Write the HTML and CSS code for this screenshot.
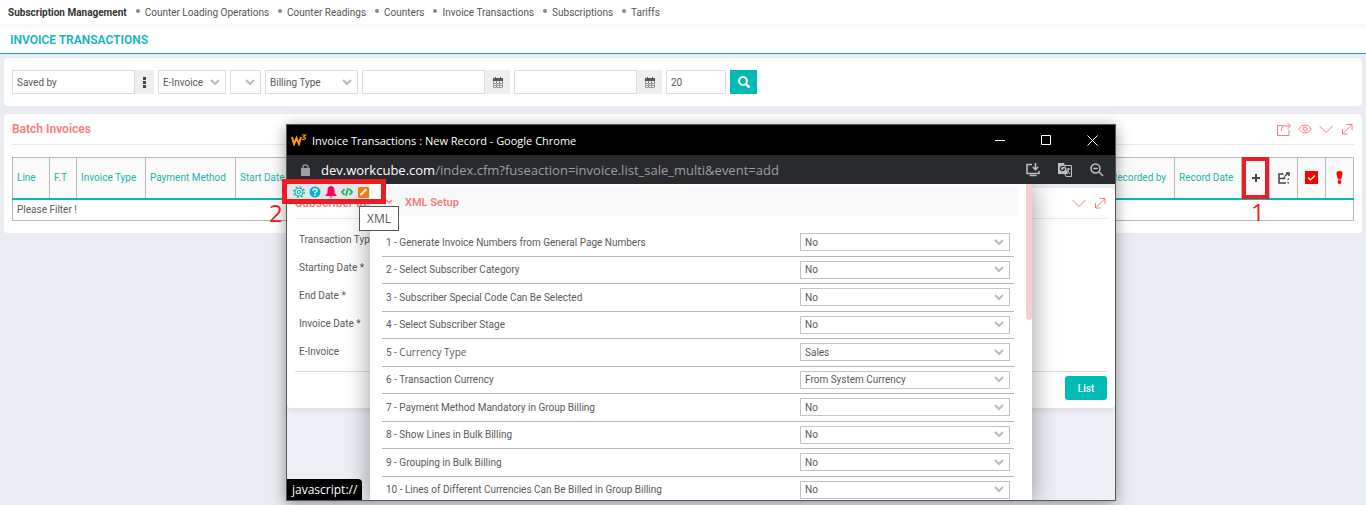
FILE: index.html
```html
<!DOCTYPE html>
<html lang="en">
<head>
    <meta charset="UTF-8">
    <meta name="viewport" content="width=device-width, initial-scale=1.0">
    <title>Invoice Transactions</title>
    <link rel="stylesheet" href="styles.css">
</head>
<body>

    <nav class="top-nav">
        <a href="#" class="active">Subscription Management</a>
        <a href="#">Counter Loading Operations</a>
        <a href="#">Counter Readings</a>
        <a href="#">Counters</a>
        <a href="#">Invoice Transactions</a>
        <a href="#">Subscriptions</a>
        <a href="#">Tariffs</a>
    </nav>

    <header class="page-title">
        <h1>INVOICE TRANSACTIONS</h1>
    </header>

    <main>
        <form class="card search-bar">
            <div class="group">
                <input type="text" class="field w-text" value="Saved by" aria-label="Saved by">
                <button type="button" class="addon addon-dots" aria-label="Select employee">
                    <svg width="3" height="11" viewBox="0 0 3 11"><path fill="#444" d="M0 0h3v3H0zM0 4h3v3H0zM0 8h3v3H0z"/></svg>
                </button>
            </div>
            <select class="field w-invoice" aria-label="E-Invoice"><option>E-Invoice</option></select>
            <select class="field w-empty" aria-label="Status"><option></option></select>
            <select class="field w-billing" aria-label="Billing Type"><option>Billing Type</option></select>
            <div class="group">
                <input type="text" class="field w-text" aria-label="Start date">
                <button type="button" class="addon" aria-label="Pick start date">
                    <svg width="10" height="11" viewBox="0 0 10 11"><path fill="none" stroke="#999" d="M.5 2.5h9v8h-9zM3.500 4v6M6.500 4v6M1 6.500h8M1 8.500h8"/><path fill="#555" d="M0 1h10v3H0zM2 0h1v2H2zM7 0h1v2H7z"/></svg>
                </button>
            </div>
            <div class="group">
                <input type="text" class="field w-text" aria-label="Finish date">
                <button type="button" class="addon" aria-label="Pick finish date">
                    <svg width="10" height="11" viewBox="0 0 10 11"><path fill="none" stroke="#999" d="M.5 2.5h9v8h-9zM3.500 4v6M6.500 4v6M1 6.500h8M1 8.500h8"/><path fill="#555" d="M0 1h10v3H0zM2 0h1v2H2zM7 0h1v2H7z"/></svg>
                </button>
            </div>
            <input type="text" class="field w-count" value="20" aria-label="Rows per page">
            <button type="submit" class="btn-search" aria-label="Search">
                <svg width="12" height="12" viewBox="0 0 12 12" fill="none" stroke="#fff"><circle cx="5" cy="5" r="3.900" stroke-width="2"/><path stroke-width="2.400" d="M8 8l3.500 3.500"/></svg>
            </button>
        </form>

        <section class="card batch">
            <div class="card-head">
                <h2>Batch Invoices</h2>
                <div class="card-tools">
                    <svg width="14" height="14" viewBox="0 0 14 14"><path d="M6 3.500H.5v10h11.500V8M4.500 9V7q0-3 3-3h5.500M10.500 1l3 3-3 3"/></svg>
                    <svg width="14" height="14" viewBox="0 0 14 14"><path d="M.5 7Q3.500 3 7 3t6.500 4Q10.500 11 7 11T.5 7z"/><circle cx="7" cy="7" r="2"/></svg>
                    <svg width="14" height="14" viewBox="0 0 14 14"><path d="M.5 4L7 10.500 13.500 4"/></svg>
                    <svg width="14" height="14" viewBox="0 0 14 14"><path d="M3 11.500l8.500-8.500M6.500 2.500H12V8M2.500 7v5H7.500"/></svg>
                </div>
            </div>
            <table class="list">
                <colgroup>
                    <col class="c-line"><col class="c-ft"><col class="c-type"><col class="c-method"><col>
                    <col class="c-by"><col class="c-date"><col class="c-icon"><col class="c-icon"><col class="c-icon"><col class="c-icon">
                </colgroup>
                <thead>
                    <tr>
                        <th>Line</th>
                        <th>F.T</th>
                        <th>Invoice Type</th>
                        <th>Payment Method</th>
                        <th>Start Date</th>
                        <th>Recorded by</th>
                        <th>Record Date</th>
                        <th class="icon marked">
                            <svg width="10" height="10" viewBox="0 0 10 10"><path fill="#444" d="M4 1h2v3h3v2H6v3H4V6H1V4h3z"/></svg>
                            <span class="mark mark-add"></span>
                            <span class="mark-no no-add">1</span>
                        </th>
                        <th class="icon">
                            <svg width="12" height="12" viewBox="0 0 12 12" fill="none" stroke="#444" stroke-width="1.500"><path d="M5.500 2H1v9h7M1 6.500h5.500V4.500M7 4l3.500-3M8 1h3v3"/><path fill="#444" stroke="none" d="M9.500 6.500H11V8H9.500zM9.500 10H11v1.500H9.500z"/></svg>
                        </th>
                        <th class="icon">
                            <svg width="13" height="13" viewBox="0 0 13 13"><path fill="red" d="M0 0h13v13H0z"/><path fill="none" stroke="#fff" stroke-width="1.200" d="M3 6.500L5.500 9 10 4.500"/></svg>
                        </th>
                        <th class="icon">
                            <svg width="7" height="13" viewBox="0 0 7 13" fill="red"><path d="M3.500 0Q7 0 6.500 3L5 8.500H2L.5 3Q0 0 3.500 0z"/><circle cx="3.500" cy="11" r="1.900"/></svg>
                        </th>
                    </tr>
                </thead>
                <tbody>
                    <tr>
                        <td colspan="11">Please Filter !</td>
                    </tr>
                </tbody>
            </table>
        </section>
    </main>

    <!-- popup window -->
    <div class="window">
        <div class="window-title">
            <svg width="16" height="12" viewBox="0 0 16 12" fill="none" stroke="#f90"><path stroke-width="2" d="M1 3l2 7 2.500-6L8 10l2-7"/><path stroke-width="1.200" d="M11 1h3.500l-2 2q2 0 2 1.300T11 5.400"/></svg>
            <span>Invoice Transactions : New Record - Google Chrome</span>
            <div class="window-buttons">
                <svg width="11" height="11" viewBox="0 0 11 11"><path d="M0 5.500h10"/></svg>
                <svg width="11" height="11" viewBox="0 0 11 11"><path d="M.5.5h9v9h-9z"/></svg>
                <svg width="11" height="11" viewBox="0 0 11 11"><path d="M.5.500l10 10M10.500.500l-10 10"/></svg>
            </div>
        </div>
        <div class="window-url">
            <svg width="9" height="12" viewBox="0 0 9 12"><path fill="#9aa0a6" d="M0 4h9v8H0z"/><path fill="none" stroke="#9aa0a6" stroke-width="1.300" d="M2 4.500V3Q2 .8 4.500.8T7 3v1.500"/></svg>
            <span class="url"><b>dev.workcube.com</b>/index.cfm?fuseaction=invoice.list_sale_multi&amp;event=add</span>
            <div class="url-tools">
                <svg width="14" height="14" viewBox="0 0 14 14" fill="none" stroke="#bdc1c6" stroke-width="1.500"><path d="M6 1.500H1v9h12V8M9.500 0v6M6.800 4l2.700 2.700L12.200 4"/><path d="M3.500 12.500h7"/></svg>
                <svg width="14" height="14" viewBox="0 0 14 14"><path fill="#bdc1c6" d="M0 0h6l4 11H0z"/><path fill="none" stroke="#bdc1c6" d="M7 2.500h6.500v11H8l-1-2.500M8.500 6h4M10.500 5v1q0 3-2 4M9 7l3 4"/><path fill="none" stroke="#292a2d" stroke-width="1.200" d="M6.500 4Q4.500 2.500 3 4t0 3 3.500-.5V6H5"/></svg>
                <svg width="14" height="14" viewBox="0 0 14 14" fill="none" stroke="#bdc1c6" stroke-width="1.500"><circle cx="5.500" cy="5.500" r="4.500"/><path d="M9 9l4 4M3.300 5.500h4.400"/></svg>
            </div>
        </div>

        <div class="window-body">
            <form class="record">
                <div class="card-head">
                    <h2>Subscriber In</h2>
                    <div class="card-tools">
                        <svg width="14" height="14" viewBox="0 0 14 14"><path d="M.5 4L7 10.500 13.500 4"/></svg>
                        <svg width="14" height="14" viewBox="0 0 14 14"><path d="M3 11.500l8.500-8.500M6.500 2.500H12V8M2.500 7v5H7.500"/></svg>
                    </div>
                </div>
                <ul class="record-fields">
                    <li>Transaction Type</li>
                    <li>Starting Date *</li>
                    <li>End Date *</li>
                    <li>Invoice Date *</li>
                    <li>E-Invoice</li>
                </ul>
                <div class="record-foot">
                    <button type="button" class="btn-list">List</button>
                </div>
            </form>

            <section class="setup">
                <div class="setup-head">
                    <svg width="8" height="6" viewBox="0 0 8 6"><path fill="none" stroke="#f27d7d" stroke-width="1.500" d="M1 1l3 3 3-3"/></svg>
                    <h2>XML Setup</h2>
                </div>
                <div class="setup-list">
                    <div class="setup-row">
                        <label for="x1">1 - Generate Invoice Numbers from General Page Numbers</label>
                        <select id="x1"><option>No</option><option>Yes</option></select>
                    </div>
                    <div class="setup-row">
                        <label for="x2">2 - Select Subscriber Category</label>
                        <select id="x2"><option>No</option><option>Yes</option></select>
                    </div>
                    <div class="setup-row">
                        <label for="x3">3 - Subscriber Special Code Can Be Selected</label>
                        <select id="x3"><option>No</option><option>Yes</option></select>
                    </div>
                    <div class="setup-row">
                        <label for="x4">4 - Select Subscriber Stage</label>
                        <select id="x4"><option>No</option><option>Yes</option></select>
                    </div>
                    <div class="setup-row">
                        <label for="x5">5 - <span class="plain">Currency Type</span></label>
                        <select id="x5"><option>Sales</option></select>
                    </div>
                    <div class="setup-row">
                        <label for="x6">6 - Transaction Currency</label>
                        <select id="x6"><option>From System Currency</option></select>
                    </div>
                    <div class="setup-row">
                        <label for="x7">7 - Payment Method Mandatory in Group Billing</label>
                        <select id="x7"><option>No</option><option>Yes</option></select>
                    </div>
                    <div class="setup-row">
                        <label for="x8">8 - Show Lines in Bulk Billing</label>
                        <select id="x8"><option>No</option><option>Yes</option></select>
                    </div>
                    <div class="setup-row">
                        <label for="x9">9 - Grouping in Bulk Billing</label>
                        <select id="x9"><option>No</option><option>Yes</option></select>
                    </div>
                    <div class="setup-row">
                        <label for="x10">10 - Lines of Different Currencies Can Be Billed in Group Billing</label>
                        <select id="x10"><option>No</option><option>Yes</option></select>
                    </div>
                </div>
                <div class="scroll-thumb"></div>
            </section>

            <div class="status">javascript://</div>
        </div>

        <div class="mark mark-tools">
            <svg width="12" height="12" viewBox="0 0 12 12" fill="none" stroke="#1bb"><circle cx="6" cy="6" r="5.200" stroke-width="1.400" stroke-dasharray="2 2.080"/><circle cx="6" cy="6" r="4"/><circle cx="6" cy="6" r="1.600"/></svg>
            <svg width="12" height="12" viewBox="0 0 12 12"><circle cx="6" cy="6" r="5.500" fill="#00b5cc"/><path fill="none" stroke="#fff" stroke-width="1.500" d="M4 4.800Q4 3 6 3t2 1.500T6 6.500v.8M6 8.200v1.500"/></svg>
            <svg width="12" height="12" viewBox="0 0 12 12" fill="#ff0050"><path d="M6 0q3.500.5 3.500 4v3L12 10H0l2.500-3V4Q2.500.5 6 0zM4.500 10.500h3L6 12z"/></svg>
            <svg width="12" height="12" viewBox="0 0 12 12" fill="none" stroke="#12b84c" stroke-width="1.700"><path d="M3.500 3L1 6l2.500 3M8.500 3L11 6 8.500 9M7 2L5 10"/></svg>
            <svg width="12" height="12" viewBox="0 0 12 12"><rect x="1" y="1" width="11" height="11" rx="1.500" fill="#f5780a"/><path fill="#fff" d="M8.500 2.500l1.500 1.500-5 5-2 .5.500-2z"/></svg>
        </div>
        <span class="mark-no no-tools">2</span>
        <div class="tooltip">XML</div>
    </div>

</body>
</html>
```
FILE: styles.css
```css
* {
    box-sizing: border-box;
}
body {
    margin: 0;
    min-height: 100vh;
    overflow: hidden;
    background-color: #e9ecf1;
    color: #5a5a5a;
    font-family: Roboto, sans-serif;
    font-size: 10px;
}
h1, h2 {
    margin: 0;
    font-weight: 600;
}
svg {
    display: block;
    flex: none;
}
input, select, button {
    font-family: inherit;
    font-size: 10px;
    color: #5a5a5a;
}

/* navigation */
.top-nav {
    display: flex;
    align-items: center;
    height: 24px;
    padding: 0 8px;
    background: white;
}
.top-nav a {
    display: flex;
    align-items: center;
    color: #555;
    text-decoration: none;
}
.top-nav a.active {
    font-weight: 700;
    color: #333;
}
.top-nav a + a::before {
    content: "";
    width: 4px;
    height: 4px;
    margin: 0 5px 2px 9px;
    border-radius: 2px;
    background: #888;
}
.page-title {
    height: 30px;
    padding: 0 10px;
    border-bottom: 1px solid #0fb0ab;
    background: linear-gradient(#f7f7f7, white 6px);
}
.page-title h1 {
    font-size: 12px;
    line-height: 32px;
    color: #13b5c0;
}

/* cards */
main {
    display: flex;
    flex-direction: column;
    gap: 8px;
    padding: 4px;
}
.card {
    border-radius: 4px;
    background: white;
    padding: 0 8px;
}
.card-head {
    display: flex;
    align-items: center;
    justify-content: space-between;
    height: 31px;
    border-bottom: 1px solid #e7e8ea;
}
.card-head h2, .setup-head h2 {
    font-size: 12px;
    color: #f27d7d;
}
.card-tools {
    display: flex;
    gap: 7px;
}
.card-tools svg {
    fill: none;
    stroke: #f27d7d;
}

/* search form */
.search-bar {
    display: flex;
    gap: 4px;
    padding: 12px 8px;
}
.group {
    display: flex;
}
.field {
    height: 24px;
    padding: 0 4px;
    border: 1px solid #ddd;
    border-radius: 0;
    background-color: white;
}
select {
    appearance: none;
    background: white url("data:image/svg+xml,%3Csvg xmlns='http://www.w3.org/2000/svg' width='10' height='7'%3E%3Cpath d='M1 1l4 4 4-4' fill='none' stroke='%23bbb' stroke-width='2'/%3E%3C/svg%3E") no-repeat right 5px center;
}
.w-text { width: 123px; }
.w-invoice { width: 68px; }
.w-empty { width: 31px; }
.w-billing { width: 93px; }
.w-count { width: 60px; }
.addon {
    display: flex;
    align-items: center;
    justify-content: center;
    width: 25px;
    padding: 0;
    border: none;
    background: #eee;
}
.addon-dots {
    width: 19px;
}
.btn-search {
    display: flex;
    align-items: center;
    justify-content: center;
    width: 27px;
    padding: 0;
    border: none;
    background: #00bab3;
}

/* invoice table */
.batch {
    padding-bottom: 12px;
}
.list {
    width: 100%;
    margin-top: 12px;
    border-collapse: collapse;
    table-layout: fixed;
}
.list th, .list td {
    padding: 0 4px;
    border: 1px solid #b9b9b9;
    text-align: left;
    white-space: nowrap;
}
.list th {
    height: 41px;
    border-bottom: 2px solid #00bab3;
    background: #fafafa;
    color: #1bb5ae;
    font-weight: 400;
}
.list td {
    height: 22px;
}
.list .icon svg {
    margin: 0 auto;
}
.c-line { width: 37px; }
.c-ft { width: 27px; }
.c-type { width: 69px; }
.c-method { width: 90px; }
.c-by { width: 68px; }
.c-date { width: 67px; }
.c-icon { width: 28px; }

/* red marks */
.mark {
    position: absolute;
    border: 5px solid #ed1c24;
}
.marked {
    position: relative;
}
.mark-add {
    inset: -1px 0;
    border-width: 4px;
}
.mark-no {
    position: absolute;
    font: 24px/24px "Open Sans", sans-serif;
    color: #ed1c24;
}
.no-add {
    top: 42px;
    left: 9px;
}
.no-tools {
    top: 76px;
    left: -18px;
}
.mark-tools {
    display: flex;
    gap: 4px;
    top: 54px;
    left: -5px;
    width: 104px;
    height: 25px;
    padding: 2px 6px;
    background: linear-gradient(to right, #e3e6ea 83px, white 83px);
}

/* popup window */
.window {
    position: absolute;
    top: 124px;
    left: 286px;
    display: flex;
    flex-direction: column;
    width: 830px;
    height: 377px;
    border: 1px solid #55575a;
    box-shadow: 0 3px 14px rgba(0, 0, 0, 0.4);
}
.window-title {
    display: flex;
    align-items: center;
    gap: 5px;
    height: 30px;
    padding: 0 17px 0 4px;
    background: black;
    color: white;
    font: 11px "Open Sans", sans-serif;
}
.window-buttons {
    display: flex;
    gap: 35px;
    margin-left: auto;
}
.window-buttons svg {
    fill: none;
    stroke: white;
}
.window-url {
    display: flex;
    align-items: center;
    gap: 11px;
    height: 29px;
    padding: 0 11px 0 14px;
    background: #292a2d;
    color: #9aa0a6;
    font: 13px "Open Sans", sans-serif;
}
.window-url b {
    font-weight: 400;
    color: white;
}
.url-tools {
    display: flex;
    gap: 18px;
    margin-left: auto;
}
.window-body {
    position: relative;
    flex: 1;
    min-height: 0;
    padding-top: 4px;
    overflow: hidden;
    background: #eceff4;
}
.record {
    padding: 0 8px;
    border-radius: 4px;
    background: white;
    box-shadow: 0 2px 6px rgba(0, 0, 0, 0.08);
}
.record-fields {
    margin: 0;
    padding: 7px 4px 5px;
    list-style: none;
    line-height: 28px;
}
.record-foot {
    display: flex;
    justify-content: flex-end;
    padding: 4px 0 8px;
    border-top: 1px solid #ddd;
}
.btn-list {
    width: 42px;
    height: 24px;
    padding: 0;
    border: none;
    border-radius: 3px;
    background: #00bab3;
    color: white;
    font-weight: 500;
}

/* setup panel */
.setup {
    position: absolute;
    top: 0;
    bottom: -4px;
    left: 83px;
    display: flex;
    flex-direction: column;
    width: 662px;
    padding: 2px 18px 0 0;
    background: white;
    box-shadow: 0 0 24px rgba(0, 0, 0, 0.4);
}
.setup-head {
    display: flex;
    align-items: center;
    gap: 12px;
    height: 30px;
    margin-right: -4px;
    padding: 2px 15px 0;
    background: #f8f8f8;
}
.setup-head h2 {
    font-size: 11px;
}
.setup-list {
    display: flex;
    flex: 1;
    flex-direction: column;
    margin: 13px 0 0 12px;
}
.setup-row {
    display: flex;
    flex: 1;
    align-items: center;
    justify-content: space-between;
    padding: 0 4px;
    border-bottom: 1px solid #b5b5b5;
}
.setup-row select {
    width: 210px;
    height: 18px;
    padding: 0 4px;
    border: 1px solid #c4c4c4;
    border-radius: 0;
}
.plain {
    font: 10px "Open Sans", sans-serif;
}
.scroll-thumb {
    position: absolute;
    top: 0;
    right: 0;
    width: 6px;
    height: 136px;
    border-radius: 0 0 3px 3px;
    background: #f5d0cf;
}
.status {
    position: absolute;
    bottom: 0;
    left: 0;
    padding: 0 5px;
    border-radius: 0 4px 0 0;
    background: black;
    color: white;
    font: 12px/21px "Open Sans", sans-serif;
}
.tooltip {
    position: absolute;
    top: 81px;
    left: 72px;
    width: 40px;
    border: 1px solid #555;
    background: white;
    font: 12px/23px "Open Sans", sans-serif;
    text-align: center;
}
```
